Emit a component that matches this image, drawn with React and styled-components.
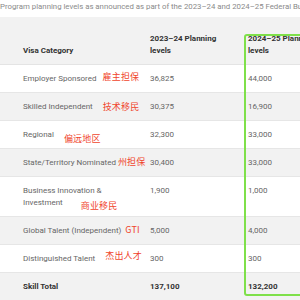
import React from "react";
import styled, { createGlobalStyle } from "styled-components";

const Global = createGlobalStyle`
  html, body { margin: 0; padding: 0; background: #fff; }
  body { font-family: Roboto, "Noto Sans CJK SC", sans-serif; }
`;

const Page = styled.div`
  width: 300px;
  height: 300px;
  overflow: hidden;
  background: #fff;
`;

const Caption = styled.div`
  height: 17px;
  line-height: 13px;
  font-size: 7.8px;
  color: #8a8a8a;
  white-space: nowrap;
  overflow: hidden;
`;

const TableWrap = styled.div`
  position: relative;
  width: 340px;
`;

const Table = styled.table`
  border-collapse: collapse;
  table-layout: fixed;
  width: 340px;
  font-size: 8px;
  line-height: 12px;
`;

const HeadRow = styled.tr`
  background: #f2f2f2;
  border-bottom: 1px solid #e4e4e4;
`;

const Th = styled.th`
  text-align: left;
  vertical-align: bottom;
  font-weight: 700;
  color: #333;
  height: 24px;
  padding: 16px 20px 7px ${(p) => p.$pl}px;
`;

const Row = styled.tr`
  background: ${(p) => (p.$shade ? "#f2f2f2" : "#fff")};
  border-bottom: 1px solid #e6e6e6;
`;

const Td = styled.td`
  vertical-align: top;
  white-space: nowrap;
  color: ${(p) => (p.$bold ? "#333" : "#666")};
  font-weight: ${(p) => (p.$bold ? 700 : 400)};
  padding: 8px 0 7px ${(p) => p.$pl}px;
`;

const Note = styled.span`
  display: inline-block;
  position: relative;
  vertical-align: top;
  height: 12px;
  line-height: 12px;
  top: ${(p) => p.$dy}px;
  margin-left: ${(p) => p.$dx}px;
  color: #f0452c;
  font-size: 9px;
  font-family: "Noto Sans CJK SC", sans-serif;
  letter-spacing: 0.2px;
`;

const Highlight = styled.div`
  position: absolute;
  left: 244px;
  top: 17px;
  width: 120px;
  height: 258px;
  border: 2px solid #7fe04a;
  border-radius: 3px;
  pointer-events: none;
`;

const rows = [
  { name: "Employer Sponsored", a: "36,825", b: "44,000", note: "雇主担保", dx: 6, dy: -2 },
  { name: "Skilled Independent", a: "30,375", b: "16,900", note: "技术移民", dx: 10, dy: 0 },
  { name: "Regional", a: "32,300", b: "33,000", note: "偏远地区", dx: 10, dy: 4 },
  { name: "State/Territory Nominated", a: "30,400", b: "33,000", note: "州担保", dx: 2, dy: -1 },
  { name: "Business Innovation & Investment", a: "1,900", b: "1,000", two: true, note: "商业移民", dx: 18, dy: 3 },
  { name: "Global Talent (Independent)", a: "5,000", b: "4,000", note: "GTI", dx: 4, dy: -1 },
  { name: "Distinguished Talent", a: "300", b: "300", note: "杰出人才", dx: 10, dy: -3 },
];

export default function App() {
  return (
    <Page>
      <Global />
      <Caption>
        Program planning levels as announced as part of the 2023–24 and 2024–25 Federal Budget
      </Caption>
      <TableWrap>
        <Table>
          <colgroup>
            <col style={{ width: 144 }} />
            <col style={{ width: 100 }} />
            <col style={{ width: 96 }} />
          </colgroup>
          <thead>
            <HeadRow>
              <Th $pl={23}>Visa Category</Th>
              <Th $pl={6}>2023–24 Planning levels</Th>
              <Th $pl={4}>2024–25 Planning levels</Th>
            </HeadRow>
          </thead>
          <tbody>
            {rows.map((r, i) => (
              <Row key={r.name} $shade={i % 2 === 1}>
                <Td $pl={23}>
                  {r.two ? (
                    <>
                      Business Innovation &amp;
                      <br />
                      Investment
                    </>
                  ) : (
                    r.name
                  )}
                  <Note $dx={r.dx} $dy={r.dy}>
                    {r.note}
                  </Note>
                </Td>
                <Td $pl={6}>{r.a}</Td>
                <Td $pl={4}>{r.b}</Td>
              </Row>
            ))}
            <Row $shade>
              <Td $pl={23} $bold>Skill Total</Td>
              <Td $pl={6} $bold>137,100</Td>
              <Td $pl={4} $bold>132,200</Td>
            </Row>
          </tbody>
        </Table>
        <Highlight />
      </TableWrap>
    </Page>
  );
}
